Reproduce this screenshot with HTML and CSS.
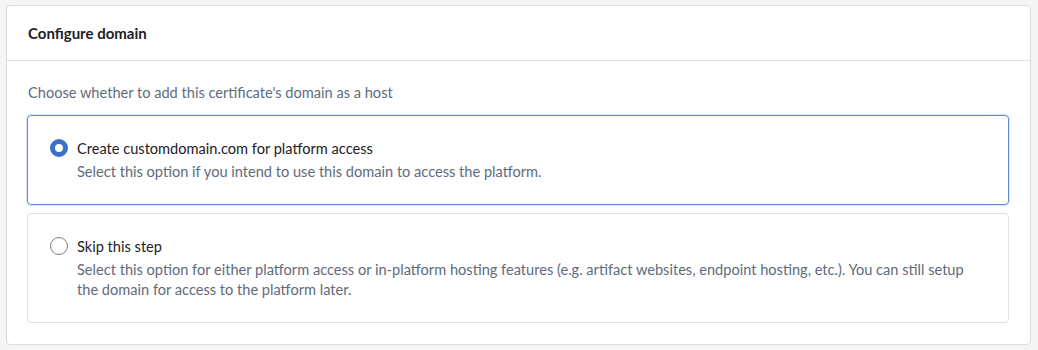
FILE: index.html
```html
<!DOCTYPE html>
<html lang="en">
<head>
<meta charset="UTF-8">
<title>Configure domain</title>
<link rel="stylesheet" href="styles.css">
</head>
<body>
<div class="card">
    <div class="card-header">Configure domain</div>
    <div class="card-body">
        <p class="hint">Choose whether to add this certificate's domain as a host</p>
        <label class="option selected">
            <input type="radio" name="host" checked>
            <span class="option-text">
                <span class="option-title">Create customdomain.com for platform access</span>
                <span class="option-desc">Select this option if you intend to use this domain to access the platform.</span>
            </span>
        </label>
        <label class="option">
            <input type="radio" name="host">
            <span class="option-text">
                <span class="option-title">Skip this step</span>
                <span class="option-desc">Select this option for either platform access or in-platform hosting features (e.g. artifact websites, endpoint hosting, etc.). You can still setup the domain for access to the platform later.</span>
            </span>
        </label>
    </div>
</div>
</body>
</html>
```

FILE: styles.css
```css
body {
    margin: 0;
    padding: 5px 7px 6px 6px;
    background-color: #f5f5f5;
    font-family: Lato, "Open Sans", sans-serif;
    font-size: 14.6px;
    color: #1c2127;
}
.card {
    background: #fff;
    border: 1px solid #dcdcdc;
    border-radius: 4px;
}
.card-header {
    height: 54px;
    padding: 0 21px;
    display: flex;
    align-items: center;
    font-weight: bold;
    font-size: 15px;
    border-bottom: 1px solid #e1e1e1;
}
.card-body {
    padding: 22px 21px 21px 20px;
}
.hint {
    margin: 0 0 12px 1px;
    color: #5f6b7c;
    line-height: 20px;
}
.option {
    display: flex;
    align-items: flex-start;
    gap: 9px;
    padding: 22px 20px 22px 22px;
    border: 1px solid #e1e1e1;
    border-radius: 4px;
    margin-bottom: 8px;
    cursor: pointer;
}
.option:last-child {
    margin-bottom: 0;
}
.option.selected {
    border-color: #5f87d4;
    box-shadow: 0 0 0 1px #dbe6f8;
}
.option input {
    appearance: none;
    width: 18px;
    height: 18px;
    margin: 1px 0 0 0;
    border: 1px solid #7b8088;
    border-radius: 50%;
    background: #fff;
    flex: none;
}
.option input:checked {
    border: 5px solid #3b6fc8;
}
.option-text {
    display: flex;
    flex-direction: column;
}
.option-title {
    line-height: 21px;
    margin-bottom: 3px;
    color: #1c2127;
}
.option-desc {
    line-height: 20px;
    color: #5f6b7c;
}
```
